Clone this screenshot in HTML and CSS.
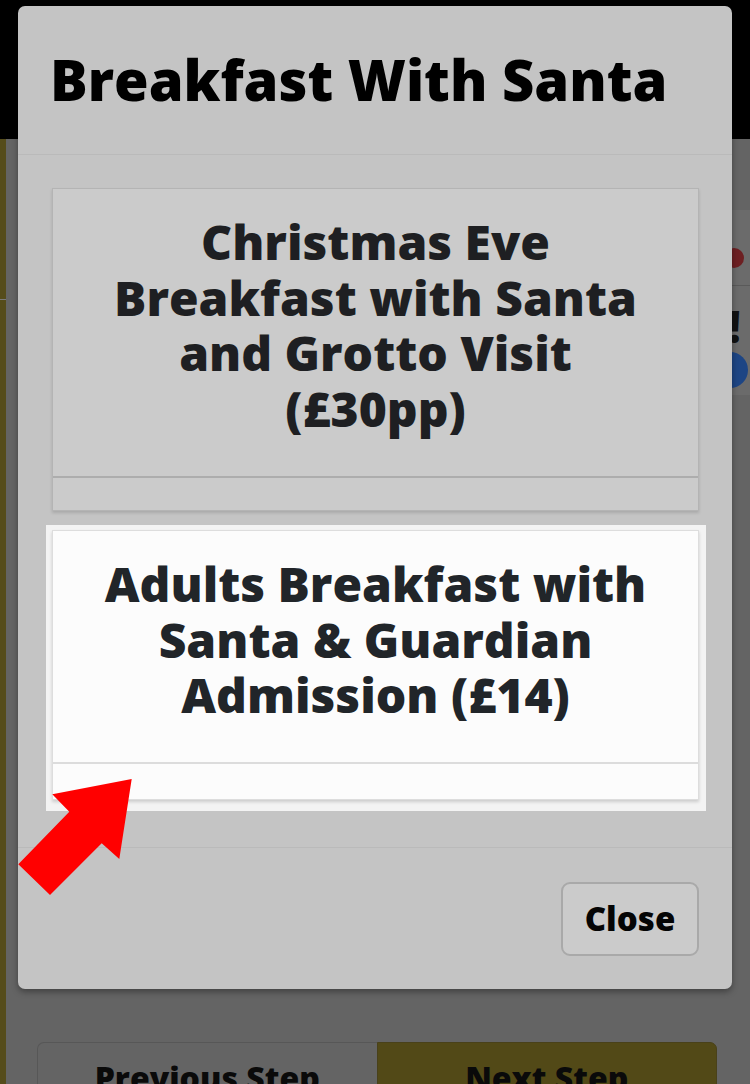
FILE: index.html
```html
<!DOCTYPE html>
<html lang="en">
<head>
<meta charset="utf-8">
<title>Breakfast With Santa</title>
<link rel="stylesheet" href="styles.css">
</head>
<body>
<div class="page">
  <header class="topbar"></header>
  <div class="main">
    <div class="strip"><span class="strip-line"></span></div>
    <div class="content">
      <div class="content-row">
        <div class="column"></div>
        <aside class="side">
          <span class="dot dot-red"></span>
          <span class="side-line"></span>
          <span class="bang">!</span>
          <span class="dot dot-blue"></span>
        </aside>
      </div>
      <div class="steps">
        <button class="step step-prev">Previous Step</button>
        <button class="step step-next">Next Step</button>
      </div>
    </div>
  </div>
</div>

<div class="modal">
  <div class="modal-header">
    <h2 class="modal-title">Breakfast With Santa</h2>
  </div>
  <div class="modal-body">
    <div class="card card-dim">
      <div class="card-body">
        <h3 class="card-title">Christmas Eve Breakfast with Santa and Grotto Visit (£30pp)</h3>
      </div>
      <div class="card-footer"></div>
    </div>
    <div class="spot">
      <div class="card card-lit">
        <div class="card-body">
          <h3 class="card-title">Adults Breakfast with Santa &amp; Guardian Admission (£14)</h3>
        </div>
        <div class="card-footer"></div>
      </div>
    </div>
  </div>
  <div class="modal-footer">
    <button class="close-btn">Close</button>
  </div>
</div>

<svg class="arrow" width="750" height="1084" viewBox="0 0 750 1084" aria-hidden="true">
  <polygon points="131.7,779 52.3,794.3 69.3,811.7 18.3,864.3 50,895 101.7,843.3 119.3,859" fill="#ff0000"/>
</svg>
</body>
</html>
```

FILE: styles.css
```css
* { box-sizing: border-box; }

html, body {
  margin: 0;
  padding: 0;
}

body {
  width: 750px;
  height: 1084px;
  overflow: hidden;
  background: #646464;
  font-family: "Open Sans", "DejaVu Sans", sans-serif;
  position: relative;
}

.page {
  display: flex;
  flex-direction: column;
  height: 1084px;
}

.topbar {
  height: 139px;
  background: #000;
  flex: none;
}

.main {
  flex: 1;
  display: flex;
}

.strip {
  width: 6px;
  background: #554c1b;
  display: flex;
  flex-direction: column;
  padding-top: 160px;
}

.strip-line {
  height: 1px;
  background: #7a7a7a;
}

.content {
  flex: 1;
  display: flex;
  flex-direction: column;
}

.content-row {
  display: flex;
  height: 903px;
}

.column {
  flex: 1;
}

.side {
  width: 18px;
  margin-top: 71px;
  height: 185px;
  background: #6b6b6b;
  display: flex;
  flex-direction: column;
  align-items: flex-start;
  padding-top: 38px;
}

.dot {
  display: block;
  border-radius: 50%;
}

.dot-red {
  width: 20px;
  height: 20px;
  background: #6d1f22;
  margin-left: -8px;
}

.side-line {
  width: 18px;
  height: 1px;
  background: #5a5a5a;
  margin-top: 17px;
}

.bang {
  font-size: 44px;
  font-weight: 800;
  line-height: 44px;
  color: #111;
  margin-top: 18px;
  margin-left: -4px;
}

.dot-blue {
  width: 36px;
  height: 36px;
  background: #1d4584;
  margin-top: 4px;
  margin-left: -20px;
}

.steps {
  display: flex;
  margin-left: 31px;
  width: 680px;
}

.step {
  flex: 1;
  height: 80px;
  font-family: "Open Sans", "DejaVu Sans", sans-serif;
  font-weight: 800;
  font-size: 32px;
  line-height: 49px;
  padding: 10px 0 0;
  align-self: flex-start;
  text-align: center;
  color: #0a0a0a;
  display: flex;
  justify-content: center;
  align-items: flex-start;
}

.step-prev {
  background: #646464;
  border: 1px solid #575757;
  border-right: 0;
  border-radius: 7px 0 0 7px;
}

.step-next {
  background: #524917;
  border: 1px solid #49411a;
  border-radius: 0 7px 7px 0;
}

/* Modal */
.modal {
  position: absolute;
  top: 6px;
  left: 18px;
  width: 714px;
  background: #c4c4c4;
  border-radius: 7px;
  box-shadow: 0 3px 6px rgba(0, 0, 0, 0.35);
  display: flex;
  flex-direction: column;
}

.modal-header {
  padding: 40px 30px 41px 32px;
  border-bottom: 1px solid #bababa;
}

.modal-title {
  margin: 0;
  font-size: 56px;
  line-height: 67px;
  font-weight: 800;
  color: #000;
}

.modal-body {
  padding: 33px 33px 28px 34px;
}

.card {
  display: flex;
  flex-direction: column;
}

.card-dim {
  background: #cbcbcb;
  border: 1px solid #b4b4b4;
  box-shadow: 0 2px 3px rgba(0, 0, 0, 0.14);
  margin-bottom: 19px;
}

.card-body {
  padding: 25px 44px 39px;
}

.card-title {
  margin: 0;
  text-align: center;
  font-size: 48px;
  line-height: 55.7px;
  font-weight: 800;
}

.card-dim .card-title {
  color: #1e1f22;
}

.card-dim .card-footer {
  height: 34px;
  border-top: 2px solid #adadad;
}

.spot {
  margin: -5px -7px 8px -6px;
  padding: 5px 7px 11px 6px;
  background: #f3f3f3;
}

.card-lit {
  background: #fcfcfc;
  border: 1px solid #dddddd;
  box-shadow: 0 2px 3px rgba(0, 0, 0, 0.16);
}

.card-lit .card-title {
  color: #212529;
}

.card-lit .card-footer {
  height: 37px;
  border-top: 2px solid #dcdcdc;
}

.modal-footer {
  border-top: 1px solid #bababa;
  padding: 34px 33px 33px;
  display: flex;
  justify-content: flex-end;
}

.close-btn {
  width: 138px;
  height: 74px;
  background: #cbcbcb;
  border: 2px solid #a9a9a9;
  border-radius: 9px;
  font-family: "Open Sans", "DejaVu Sans", sans-serif;
  font-weight: 800;
  font-size: 33px;
  color: #050505;
  padding: 0;
}

.arrow {
  position: absolute;
  top: 0;
  left: 0;
  pointer-events: none;
}
```
